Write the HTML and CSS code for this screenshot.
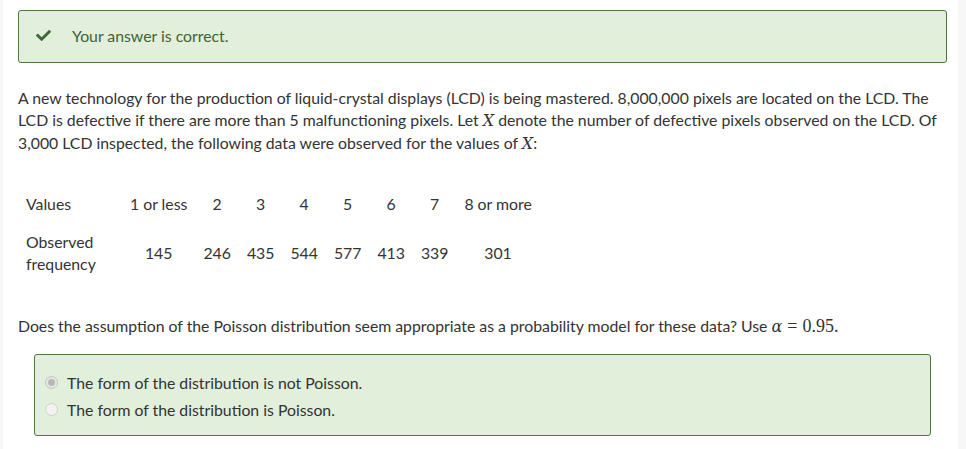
FILE: index.html
```html
<!DOCTYPE html>
<html>
<head>
<meta charset="utf-8">
<link rel="stylesheet" href="styles.css">
</head>
<body>
<div class="page">
  <div class="outcome">
    <svg class="check" viewBox="0 0 512 512" width="15" height="15"><path d="M173.898 439.404l-166.4-166.4c-9.997-9.997-9.997-26.206 0-36.204l36.203-36.204c9.997-9.998 26.207-9.998 36.204 0L192 312.69 432.095 72.596c9.997-9.997 26.207-9.997 36.204 0l36.203 36.204c9.997 9.997 9.997 26.206 0 36.204l-294.4 294.401c-9.998 9.997-26.207 9.997-36.204-.001z"/></svg>
    <span class="outcome-text">Your answer is correct.</span>
  </div>

  <p class="para">A new technology for the production of liquid-crystal displays (LCD) is being mastered. 8,000,000 pixels are located on the LCD. The LCD is defective if there are more than 5 malfunctioning pixels. Let <span class="math">X</span> denote the number of defective pixels observed on the LCD. Of 3,000 LCD inspected, the following data were observed for the values of <span class="math">X</span>:</p>

  <table class="data">
    <tr>
      <td class="head">Values</td>
      <td>1 or less</td><td>2</td><td>3</td><td>4</td><td>5</td><td>6</td><td>7</td><td>8 or more</td>
    </tr>
    <tr>
      <td class="head">Observed frequency</td>
      <td>145</td><td>246</td><td>435</td><td>544</td><td>577</td><td>413</td><td>339</td><td>301</td>
    </tr>
  </table>

  <p class="question">Does the assumption of the Poisson distribution seem appropriate as a probability model for these data? Use <span class="math">α</span><span class="mathup eq">=</span><span class="mathup">0.95.</span></p>

  <div class="answer">
    <div class="option"><span class="radio checked"></span><span>The form of the distribution is not Poisson.</span></div>
    <div class="option"><span class="radio"></span><span>The form of the distribution is Poisson.</span></div>
  </div>
</div>
</body>
</html>
```

FILE: styles.css
```css
html, body {
  margin: 0;
  padding: 0;
}
body {
  background: #f7f7f7;
  font-family: Lato, "Open Sans", sans-serif;
  font-size: 15.8px;
  color: #333333;
}
.page {
  margin-left: 3px;
  width: 955px;
  min-height: 449px;
  background: #ffffff;
  padding: 10px 11px 0 15px;
  box-sizing: border-box;
}
.outcome {
  display: flex;
  align-items: center;
  height: 53px;
  box-sizing: border-box;
  border: 1px solid #4a7a3f;
  border-radius: 3px;
  background: #e1efdb;
  padding: 0 0 2px 17px;
}
.check {
  fill: #3d6b35;
  display: block;
}
.outcome-text {
  margin-left: 21px;
  color: #3f6437;
  line-height: 22px;
}
.para {
  margin: 24px 0 0 0;
  line-height: 22px;
}
.math {
  font-family: "DejaVu Serif", "Liberation Serif", serif;
  font-style: italic;
  font-size: 16px;
}
.mathup {
  font-family: "Liberation Serif", "DejaVu Serif", serif;
  font-size: 18px;
}
.eq {
  margin: 0 5px;
}
.data {
  border-collapse: collapse;
  margin-top: 30px;
}
.data td {
  padding: 8px;
  text-align: center;
  line-height: 22px;
  vertical-align: middle;
}
.data td.head {
  text-align: left;
  width: 88px;
}
.question {
  margin: 32px 0 0 0;
  line-height: 22px;
}
.answer {
  margin: 16px 0 0 16px;
  width: 897px;
  box-sizing: border-box;
  border: 1px solid #4a7a3f;
  border-radius: 3px;
  background: #e1efdb;
  padding: 14px 0 12px 10px;
}
.option {
  display: flex;
  align-items: center;
  height: 27px;
  line-height: 22px;
}
.radio {
  width: 13px;
  height: 13px;
  box-sizing: border-box;
  border-radius: 50%;
  border: 1px solid #d0d0d0;
  background: #f2f2f2;
  margin-right: 9px;
  display: flex;
  align-items: center;
  justify-content: center;
}
.radio.checked {
  border-color: #c4c4c4;
  background: #e6e6e6;
}
.radio.checked::after {
  content: "";
  width: 7px;
  height: 7px;
  border-radius: 50%;
  background: #b8b8b8;
}
```
